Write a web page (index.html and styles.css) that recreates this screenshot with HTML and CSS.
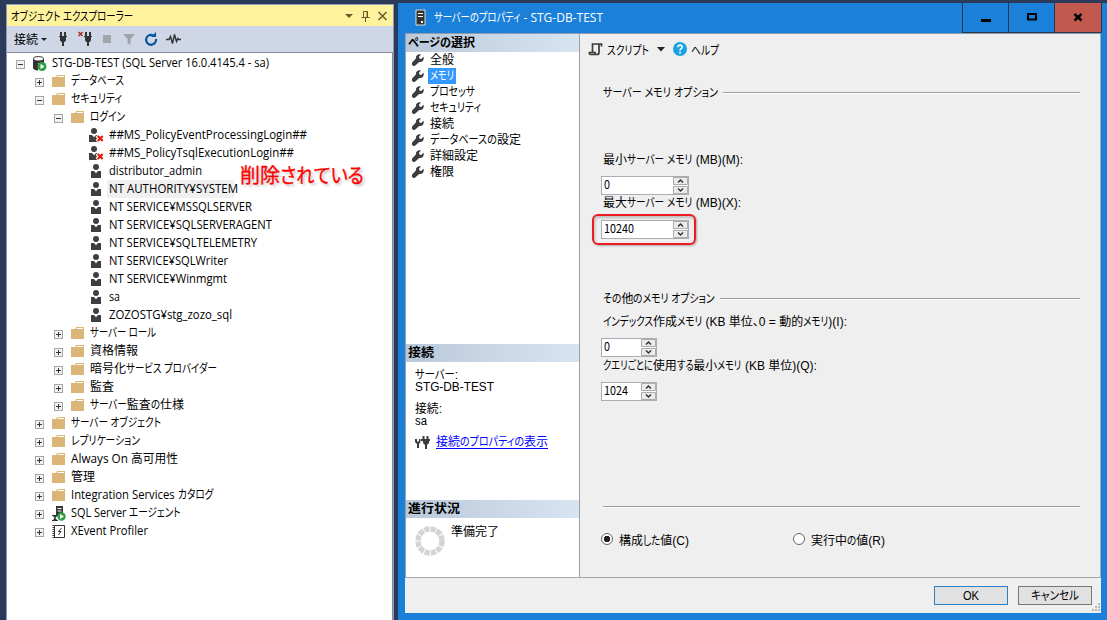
FILE: index.html
```html
<!DOCTYPE html>
<html lang="ja">
<head>
<meta charset="utf-8">
<title>サーバーのプロパティ - STG-DB-TEST</title>
<link rel="stylesheet" href="styles.css">
</head>
<body>
<svg class="defs" width="0" height="0">
  <symbol id="folder" viewBox="0 0 13 12"><path d="M0 2h4l1-2h8v12H0z" fill="#dcb679"/><path d="M5.500 1.500H12" stroke="#fff" stroke-width="1"/></symbol>
  <symbol id="user" viewBox="0 0 13 14"><circle cx="6" cy="3" r="3" fill="#3f3f41"/><path d="M1 7h3l2 2.200L8 7h3v7H1z" fill="#3f3f41"/></symbol>
  <symbol id="userx" viewBox="0 0 15 14"><circle cx="5" cy="3" r="3" fill="#3f3f41"/><path d="M0 7h3l2 2.200L7 7h2v7H0z" fill="#3f3f41"/><path d="M8 7.500l6 6M14 7.500l-6 6" stroke="#fff" stroke-width="4"/><path d="M8.700 8l5 5M13.700 8l-5 5" stroke="#e51400" stroke-width="2"/></symbol>
  <symbol id="wrench" viewBox="0 0 12 12"><path d="M11.500 2.800 9.300 5 7.400 4.600 7 2.700 9 .5A3.800 3.800 0 0 0 3.900 4.600L.4 8.200a2 2 0 0 0 3.100 3.100L7.200 7.900a3.800 3.800 0 0 0 4.300-5.100z" fill="#3c3c3e"/></symbol>
  <symbol id="plug" viewBox="0 0 10 14"><path d="M1 4h8v1H8v3.500L6.500 10H6v4H4v-4h-.5L2 8.500V5H1zM2 0h2v4H2zM6 0h2v4H6z" fill="#333"/></symbol>
  <symbol id="ud" viewBox="0 0 15 17"><path d="M.5.500h14v7H.5zM.5 9.500h14v7H.5z" fill="#ececec" stroke="#acacac"/><path d="M5 5.500L7.500 3 10 5.500M5 11.500L7.500 14 10 11.500" fill="none" stroke="#333" stroke-width="1.500"/></symbol>
</svg>
<main class="desktop">
  <section class="explorer">
    <header class="ex-title"><span class="t" data-w="122">オブジェクト エクスプローラー</span>
      <svg width="44" height="14" viewBox="0 0 44 14"><path d="M1 5h8L5 9z" fill="#6b5a25"/><path d="M19.500 8V2.500h4V8M17.500 8.500h8M21.500 9v4M23 2v6" fill="none" stroke="#6b5a25"/><path d="M34.500 3l8 8M42.500 3l-8 8" stroke="#6b5a25" stroke-width="1.500"/></svg>
    </header>
    <div class="ex-tools"><span class="t" data-w="24">接続</span>
      <svg width="146" height="18" viewBox="40 0 146 18"><path d="M41 8h6l-3 3z" fill="#222"/><use href="#plug" x="58" y="2" width="10" height="14"/><path d="M78.500 2l4 4M82.500 2l-4 4" stroke="#a1260d" stroke-width="1.300"/><use href="#plug" x="83" y="2" width="10" height="14"/><path d="M103 5h8v8h-8z" fill="#a5a6aa"/><path d="M123 4h12l-4.500 5v6l-3-2V9z" fill="#a0a2a8"/><path d="M153 5.200A5 5 0 1 0 156 9" fill="none" stroke="#00539c" stroke-width="2.200"/><path d="M151 7h5V2z" fill="#00539c"/><path d="M166 9.500h3l1.500-3 2 7 2-9 2 7 1.500-3 1 1h2" fill="none" stroke="#333" stroke-width="1.400"/></svg>
    </div>
    <div class="tree">
      <div class="row l0"><i class="box"></i><svg class="ic big" viewBox="0 0 14 15"><path d="M0 3v9c0 1.500 3 2.500 5 2.500V7h6V3z" fill="#333"/><ellipse cx="5.500" cy="2.800" rx="5" ry="2.200" fill="#fff" stroke="#333"/><circle cx="9" cy="10.500" r="4.500" fill="#2f9e44"/><path d="M7.500 8v5l4-2.500z" fill="#fff"/></svg><span class="t" data-w="217">STG-DB-TEST (SQL Server 16.0.4145.4 - sa)</span></div>
      <div class="row l1"><i class="box plus"></i><svg class="ic"><use href="#folder"/></svg><span class="t" data-w="53">データベース</span></div>
      <div class="row l1"><i class="box"></i><svg class="ic"><use href="#folder"/></svg><span class="t" data-w="51">セキュリティ</span></div>
      <div class="row l2"><i class="box"></i><svg class="ic"><use href="#folder"/></svg><span class="t" data-w="35">ログイン</span></div>
      <div class="row l3"><svg class="ux"><use href="#userx"/></svg><span class="t" data-w="198">##MS_PolicyEventProcessingLogin##</span></div>
      <div class="row l3"><svg class="ux"><use href="#userx"/></svg><span class="t" data-w="185">##MS_PolicyTsqlExecutionLogin##</span></div>
      <div class="row l3"><svg class="us"><use href="#user"/></svg><span class="t" data-w="93">distributor_admin</span></div>
      <div class="row l3"><svg class="us"><use href="#user"/></svg><span class="t hot" data-w="129">NT AUTHORITY¥SYSTEM</span></div>
      <div class="row l3"><svg class="us"><use href="#user"/></svg><span class="t" data-w="143">NT SERVICE¥MSSQLSERVER</span></div>
      <div class="row l3"><svg class="us"><use href="#user"/></svg><span class="t" data-w="163">NT SERVICE¥SQLSERVERAGENT</span></div>
      <div class="row l3"><svg class="us"><use href="#user"/></svg><span class="t" data-w="148">NT SERVICE¥SQLTELEMETRY</span></div>
      <div class="row l3"><svg class="us"><use href="#user"/></svg><span class="t" data-w="119">NT SERVICE¥SQLWriter</span></div>
      <div class="row l3"><svg class="us"><use href="#user"/></svg><span class="t" data-w="118">NT SERVICE¥Winmgmt</span></div>
      <div class="row l3"><svg class="us"><use href="#user"/></svg><span class="t" data-w="11">sa</span></div>
      <div class="row l3"><svg class="us"><use href="#user"/></svg><span class="t" data-w="123">ZOZOSTG¥stg_zozo_sql</span></div>
      <div class="row l2"><i class="box plus"></i><svg class="ic"><use href="#folder"/></svg><span class="t" data-w="66">サーバー ロール</span></div>
      <div class="row l2"><i class="box plus"></i><svg class="ic"><use href="#folder"/></svg><span class="t" data-w="48">資格情報</span></div>
      <div class="row l2"><i class="box plus"></i><svg class="ic"><use href="#folder"/></svg><span class="t" data-w="127">暗号化サービス プロバイダー</span></div>
      <div class="row l2"><i class="box plus"></i><svg class="ic"><use href="#folder"/></svg><span class="t" data-w="24">監査</span></div>
      <div class="row l2"><i class="box plus"></i><svg class="ic"><use href="#folder"/></svg><span class="t" data-w="94">サーバー監査の仕様</span></div>
      <div class="row l1"><i class="box plus"></i><svg class="ic"><use href="#folder"/></svg><span class="t" data-w="90">サーバー オブジェクト</span></div>
      <div class="row l1"><i class="box plus"></i><svg class="ic"><use href="#folder"/></svg><span class="t" data-w="69">レプリケーション</span></div>
      <div class="row l1"><i class="box plus"></i><svg class="ic"><use href="#folder"/></svg><span class="t" data-w="107">Always On 高可用性</span></div>
      <div class="row l1"><i class="box plus"></i><svg class="ic"><use href="#folder"/></svg><span class="t" data-w="24">管理</span></div>
      <div class="row l1"><i class="box plus"></i><svg class="ic"><use href="#folder"/></svg><span class="t" data-w="142">Integration Services カタログ</span></div>
      <div class="row l1"><i class="box plus"></i><svg class="ic big" viewBox="0 0 14 15"><path d="M4 0h7v9H4z" fill="#333"/><path d="M5.500 2.500h4M5.500 5h4" stroke="#fff"/><path d="M0 9h6v1H5l-1.500 2L5 14h1v1H0v-1h1l1.500-2L1 10H0z" fill="#333"/><circle cx="9.500" cy="10.500" r="4.200" fill="#2f9e44"/><path d="M8 8v5l4-2.500z" fill="#fff"/></svg><span class="t" data-w="110">SQL Server エージェント</span></div>
      <div class="row l1"><i class="box plus"></i><svg class="ic big" viewBox="0 0 14 15"><path d="M2.500 1.500h10v12h-10z" fill="#fff" stroke="#333"/><path d="M1.500 1v13" stroke="#333" stroke-width="2" stroke-dasharray="1 1"/><path d="M9.500 4L6.500 7.500h2.500L6.500 11" fill="none" stroke="#333"/></svg><span class="t" data-w="77">XEvent Profiler</span></div>
    </div>
    <div class="note"><span class="t" data-w="124">削除されている</span></div>
  </section>

  <section class="dialog">
    <header class="titlebar">
      <svg width="12" height="18" viewBox="0 0 12 18"><path d="M1 1h9v15H1z" fill="#333" stroke="#ddd"/><path d="M3 4.500h5M3 7.500h5" stroke="#fff"/><path d="M6 12h2v2H6z" fill="#fff"/></svg>
      <span class="t" data-w="169">サーバーのプロパティ - STG-DB-TEST</span>
      <div class="caps">
        <b><svg width="10" height="12"><path d="M0 7h10v3H0z"/></svg></b>
        <b><svg width="10" height="12"><path d="M1 2h8v5.500H1z" fill="none" stroke="#000" stroke-width="2"/></svg></b>
        <b class="close"><svg width="10" height="12"><path d="M1.500 2l7 6.500M8.500 2l-7 6.500" stroke="#000" stroke-width="2.400"/></svg></b>
      </div>
    </header>
    <div class="client">
      <div class="upper">
        <aside class="side">
          <h2><span class="t" data-w="67">ページの選択</span></h2>
          <ul class="pages">
            <li><svg><use href="#wrench"/></svg><span class="t" data-w="24">全般</span></li>
            <li><svg><use href="#wrench"/></svg><span class="sel"><span class="t" data-w="24">メモリ</span></span></li>
            <li><svg><use href="#wrench"/></svg><span class="t" data-w="45">プロセッサ</span></li>
            <li><svg><use href="#wrench"/></svg><span class="t" data-w="51">セキュリティ</span></li>
            <li><svg><use href="#wrench"/></svg><span class="t" data-w="24">接続</span></li>
            <li><svg><use href="#wrench"/></svg><span class="t" data-w="91">データベースの設定</span></li>
            <li><svg><use href="#wrench"/></svg><span class="t" data-w="48">詳細設定</span></li>
            <li><svg><use href="#wrench"/></svg><span class="t" data-w="24">権限</span></li>
          </ul>
          <h2><span class="t" data-w="26">接続</span></h2>
          <div class="conn">
            <p><span class="t" data-w="43">サーバー:</span></p><p><span class="t" data-w="79">STG-DB-TEST</span></p>
            <p class="gap"><span class="t" data-w="27">接続:</span></p><p><span class="t" data-w="12">sa</span></p>
            <div class="link"><svg width="15" height="14" viewBox="0 0 15 14"><path d="M0 4v3l2 2v4h2V9l1.500-2V4H4v2.500H2V4z" fill="#3c3c3e"/><path d="M6 4h9v2h-1v2l-2 2v4h-2v-4L8 8V6H6zM7.500 1h2v3h-2zM11.500 1h2v3h-2z" fill="#3c3c3e"/></svg><a><span class="t" data-w="112">接続のプロパティの表示</span></a></div>
          </div>
          <h2><span class="t" data-w="52">進行状況</span></h2>
          <div class="prog"><svg width="30" height="30"><circle cx="15" cy="15" r="12" fill="none" stroke="#d4d4d4" stroke-width="5.500" stroke-dasharray="5.300 1"/></svg><span class="t" data-w="48">準備完了</span></div>
        </aside>
        <div class="pane">
          <div class="ptools">
            <svg width="15" height="14" viewBox="0 0 15 14"><path d="M4.500 10V2h9v2.500M11 2v8.500a2 2 0 0 1-2 2H2.500c-1 0-1.500-1-1-2H7c0 1 .5 2 1.500 2" fill="none" stroke="#3c3c3e" stroke-width="1.700"/></svg>
            <span class="t" data-w="42">スクリプト</span>
            <svg class="dd" width="8" height="5"><path d="M0 0h8L4 4.500z" fill="#222"/></svg>
            <svg width="14" height="14"><circle cx="7" cy="7" r="7" fill="#1ba1e2"/><path d="M4.800 5.300c0-3 4.600-2.700 4.400-.2C9.100 6.600 7 6.700 7 8.600" fill="none" stroke="#fff" stroke-width="1.600"/><path d="M6.200 9.800h1.700v1.700H6.200z" fill="#fff"/></svg>
            <span class="t" data-w="28">ヘルプ</span>
          </div>
          <div class="group g1"><span class="t" data-w="115">サーバー メモリ オプション</span><hr></div>
          <div class="lab a"><span class="t" data-w="140">最小サーバー メモリ (MB)(M):</span></div>
          <div class="spin wide"><span class="num"><span class="t" data-w="6">0</span></span><i class="ud"><svg width="15" height="17"><use href="#ud"/></svg></i></div>
          <div class="lab"><span class="t" data-w="138">最大サーバー メモリ (MB)(X):</span></div>
          <div class="spin wide marked"><span class="num"><span class="t" data-w="30">10240</span></span><i class="ud"><svg width="15" height="17"><use href="#ud"/></svg></i></div>
          <div class="group g2"><span class="t" data-w="112">その他のメモリ オプション</span><hr></div>
          <div class="lab c"><span class="t" data-w="244">インデックス作成メモリ (KB 単位、0 = 動的メモリ)(I):</span></div>
          <div class="spin"><span class="num"><span class="t" data-w="6">0</span></span><i class="ud"><svg width="15" height="17"><use href="#ud"/></svg></i></div>
          <div class="lab d"><span class="t" data-w="214">クエリごとに使用する最小メモリ (KB 単位)(Q):</span></div>
          <div class="spin"><span class="num"><span class="t" data-w="24">1024</span></span><i class="ud"><svg width="15" height="17"><use href="#ud"/></svg></i></div>
          <hr class="rule">
          <div class="radios"><label><i class="radio on"></i><span class="t" data-w="70">構成した値(C)</span></label><label><i class="radio"></i><span class="t" data-w="74">実行中の値(R)</span></label></div>
        </div>
      </div>
      <footer class="foot"><button class="ok"><span class="t" data-w="16">OK</span></button><button><span class="t" data-w="48">キャンセル</span></button>
        <svg class="grip" width="9" height="9"><path d="M6 0h2v2H6zM3 3h2v2H3zM6 3h2v2H6zM0 6h2v2H0zM3 6h2v2H3zM6 6h2v2H6z" fill="#bbb"/></svg>
      </footer>
    </div>
  </section>
</main>
<script src="fit.js"></script>
</body>
</html>
```
FILE: fit.js
```javascript
const natural = el => el.getBoundingClientRect().width;

function squeeze(el, width, scale) {
  el.style.width = width + "px";
  el.style.transform = "scaleX(" + scale + ")";
}

document.querySelectorAll(".t").forEach(label => {
  const target = Number(label.dataset.w);
  const parts = label.textContent.match(/[\u3041-\u30ff]+(?: [\u3041-\u30ff]+)*|[^\u3041-\u30ff]+/g);
  if (parts.length > 1) {
    label.textContent = "";
    const runs = parts.map(text => {
      const run = document.createElement("span");
      run.className = "run";
      run.textContent = text;
      label.append(run);
      return { run, kana: /[\u3041-\u30ff]/.test(text), width: natural(run) };
    });
    const sum = kana => runs.filter(r => r.kana === kana).reduce((a, r) => a + r.width, 0);
    let k = (target - sum(false)) / sum(true);
    let other = 1;
    if (k < 0.76) {
      k = 0.8;
      other = (target - sum(true) * k) / sum(false);
    }
    runs.forEach(r => {
      const scale = r.kana ? k : other;
      squeeze(r.run, r.width * scale, scale);
    });
  } else {
    squeeze(label, target, target / natural(label));
  }
});
```
FILE: styles.css
```css
*, *::after { box-sizing: border-box; }
body { margin: 0; width: 1107px; height: 620px; overflow: hidden; font: 12px "Open Sans", "Noto Sans CJK JP", sans-serif; color: #000; }
.defs { position: absolute; }
svg { display: block; flex: none; }
h2, p, ul { margin: 0; padding: 0; }
.t, .run { display: inline-block; flex: none; white-space: pre; font-feature-settings: "palt"; transform-origin: 0 50%; }
.desktop { display: flex; height: 620px; background: #2b3a58; padding-left: 6px; }

.explorer { position: relative; width: 388px; margin-top: 4px; border: 1px solid #8e9bbc; border-bottom: 0; background: #fff; }
.ex-title { display: flex; align-items: center; justify-content: space-between; height: 21px; padding: 0 5px 0 4px; background: #fff29d; }
.ex-tools { display: flex; align-items: center; gap: 2px; height: 27px; padding-left: 7px; background: #cfd6e5; border-bottom: 1px solid #83889a; }
.tree { height: 567px; padding-top: 1px; border-right: 1px solid #83889a; }
.row { display: flex; align-items: center; height: 18px; line-height: 18px; }
.l0 { padding-left: 9px; }
.l1 { padding-left: 28px; }
.l2 { padding-left: 47px; }
.l3 { padding-left: 80px; }
.box { width: 9px; height: 9px; margin: 3px 8px 0 0; border: 1px solid #a5a5a5; background: linear-gradient(#333, #333) center / 5px 1px no-repeat #f3f3f3; flex: none; }
.box.plus { background: linear-gradient(#333, #333) center / 5px 1px no-repeat, linear-gradient(#333, #333) center / 1px 5px no-repeat #f3f3f3; }
.ic { width: 13px; height: 12px; margin: -1px 6px 0 0; }
.ic.big { width: 14px; height: 15px; margin: 0 5px 0 0; }
.us { width: 13px; height: 14px; margin: 0 6px 0 3px; }
.ux { width: 15px; height: 14px; margin: 0 5px 0 2px; }
.hot { background: #f0f0f0; box-shadow: -2px 0 #f0f0f0, 2px 0 #f0f0f0; }
.note { position: absolute; left: 233px; top: 156px; font-size: 20px; line-height: 30px; color: #f00; -webkit-text-stroke: 0.3px #f00; text-shadow: 2px 2px 3px #bbb; }

.dialog { width: 709px; margin: 3px 0 0 4px; padding: 0 6px 0 7px; background: #1a80d9; font-family: "Liberation Sans", "Noto Sans CJK JP", sans-serif; }
.titlebar { display: flex; align-items: center; gap: 8px; height: 30px; padding-left: 10px; color: #fff; font-family: "Open Sans", "Noto Sans CJK JP", sans-serif; }
.titlebar .t { margin: -2px 0 0 -1px; }
.caps { display: flex; height: 30px; margin-left: auto; border: 1px solid #26364d; border-top: 0; margin-right: -1px; }
.caps b { display: flex; align-items: center; justify-content: center; width: 46px; border-right: 1px solid #26364d; }
.caps .close { width: 46px; background: #c1594f; border: 0; }
.client { display: flex; flex-direction: column; height: 580px; background: #efefef; border-top: 1px solid #8f9bab; }
.upper { display: flex; height: 544px; border-bottom: 1px solid #a5a7ae; border-right: 1px solid #a5a7ae; }
.side { width: 175px; border: 1px solid #a0a0a0; border-width: 0 1px; background: #fff; }
.side h2 { height: 18px; padding-left: 2px; font-size: 12px; line-height: 18px; background: linear-gradient(90deg, #bac9da, #d7e4f2); }
.pages { height: 292px; list-style: none; }
.pages li { display: flex; align-items: center; height: 16px; line-height: 16px; padding-left: 6px; }
.pages svg { width: 12px; height: 12px; margin-right: 6px; }
.sel { display: flex; background: #3399ff; color: #fff; margin-left: -2px; padding: 0 2px; }
.conn { height: 138px; padding: 7px 0 0 9px; }
.conn p { display: flex; line-height: 12px; height: 12px; }
.conn .gap { margin-top: 10px; }
.link { display: flex; align-items: center; gap: 6px; margin-top: 7px; height: 15px; line-height: 15px; }
.link a { display: flex; height: 14px; color: #00f; border-bottom: 1px solid #00f; }
.prog { display: flex; gap: 6px; padding: 4px 0 0 9px; }
.prog svg { margin-top: 4px; }
.pane { width: 520px; padding: 4px 20px 0 21px; }
.ptools { display: flex; align-items: center; height: 22px; margin-left: -13px; }
.ptools .t { margin-left: 4px; }
.dd { margin: 0 8px 0 8px; }
.group { display: flex; align-items: center; gap: 5px; height: 16px; padding-left: 2px; }
.group .t { margin-top: -3px; }
hr { flex: 1; margin: 0; border: 0; height: 2px; background: linear-gradient(#9c9c9c 50%, #fff 50%); }
.g1 { margin-top: 25px; }
.g2 { margin-top: 52px; }
.lab { display: flex; height: 16px; line-height: 16px; padding-left: 2px; }
.lab.a { margin-top: 51px; }
.lab.c { margin-top: 7px; }
.lab.d { margin-top: 1px; }
.spin { display: flex; justify-content: space-between; width: 56px; height: 19px; margin-top: 8px; border: 1px solid #abadb3; background: #fff; }
.spin.wide { width: 88px; }
.marked { position: relative; margin-top: 9px; }
.marked::after { content: ""; position: absolute; left: -10px; top: -7px; width: 104px; height: 31px; border: 2px solid #ed1c24; border-radius: 6px; box-shadow: 1px 1px 2px #aaa, inset 1px 2px 3px #bbb; }
.num { display: flex; padding-left: 2px; line-height: 13px; font-family: "Noto Sans CJK JP", sans-serif; }
.ud { width: 15px; }
.rule { margin: 105px 0 0 2px; }
.radios { display: flex; margin-top: 23px; }
.radios label { display: flex; align-items: center; width: 192px; gap: 6px; height: 16px; }
.radio { width: 12px; height: 12px; border: 1px solid #666; border-radius: 50%; background: #fff; }
.radio.on { background: radial-gradient(circle, #222 3px, #fff 3.5px); }
.foot { position: relative; display: flex; justify-content: flex-end; gap: 10px; padding: 8px 9px 0 0; height: 34px; }
.foot button { display: flex; align-items: center; justify-content: center; width: 74px; height: 19px; padding: 0; border: 1px solid #777; background: #e1e1e1; font: inherit; line-height: 16px; }
.foot .ok { border-color: #2f7fc4; }
.grip { position: absolute; right: 0; bottom: 0; }
```
